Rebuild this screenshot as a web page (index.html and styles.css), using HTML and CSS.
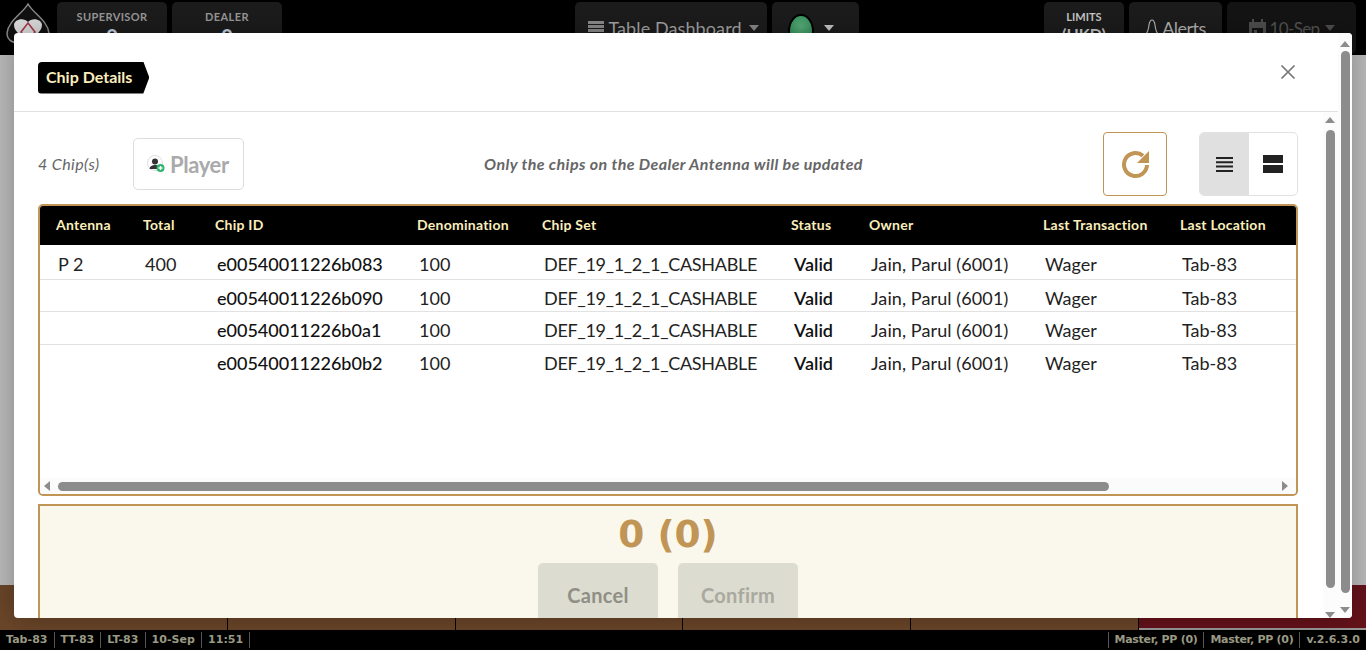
FILE: index.html
```html
<!DOCTYPE html>
<html lang="en">
<head>
    <meta charset="UTF-8">
    <meta name="viewport" content="width=device-width, initial-scale=1.0">
    <title>Chip Details</title>
    <link rel="stylesheet" href="styles.css">
</head>
<body>
    <!-- Top bar -->
    <header class="topbar">
        <svg class="logo" width="46" height="50" viewBox="0 0 46 50">
            <path d="M23 1 C28 10 43 18 44 30 C44 38 36 42 29 38 C30 42 31 45 33 48 L13 48 C15 45 16 42 17 38 C10 42 2 38 2 30 C3 18 18 10 23 1 Z" fill="#111" stroke="#8a8a8a" stroke-width="1.5"/>
            <path d="M23 39 C17 33 9 29 9 22 C9 16 19 14 23 19 C27 14 37 16 37 22 C37 29 29 33 23 39 Z" fill="#ddd"/>
            <path d="M23 20 L30 29 L23 38 L16 29 Z" fill="none" stroke="#a8384a" stroke-width="1.6"/>
        </svg>
        <div class="stat stat-wide"><span class="stat-label">SUPERVISOR</span><span class="stat-value">0</span></div>
        <div class="stat stat-wide"><span class="stat-label">DEALER</span><span class="stat-value">0</span></div>

        <div class="topbar-center">
            <div class="top-btn dashboard-btn">
                <svg width="16" height="14" viewBox="0 0 16 14"><path d="M0 0h16v3H0zM0 4h16v3H0zM0 8h16v3H0zM0 12h16v2H0z" fill="#8c8c8c"/></svg>
                <span>Table Dashboard</span><i class="caret"></i>
            </div>
            <div class="top-btn status-btn"><i class="status-dot"></i><i class="caret caret-light"></i></div>
        </div>

        <div class="topbar-right">
            <div class="stat limits"><span class="stat-label">LIMITS</span><span class="stat-value">(HKD)</span></div>
            <div class="top-btn alerts-btn">
                <svg width="14" height="19" viewBox="0 0 14 19"><path d="M7 1 C9 1 9.500 3 10 6 C10.500 10 11 13 13 15 L1 15 C3 13 3.500 10 4 6 C4.500 3 5 1 7 1 Z M5.500 16 H8.500 L7 18 Z" fill="none" stroke="#b5b5b5" stroke-width="1.2"/></svg>
                <span>Alerts</span>
            </div>
            <div class="top-btn date-btn">
                <svg width="19" height="19" viewBox="0 0 19 19"><path d="M1 3h3V0h2v3h7V0h2v3h3v16H1z M4 9v7h11V9z M6 11h3v3H6z" fill="#4f4f4f" fill-rule="evenodd"/></svg>
                <span>10-Sep</span><i class="caret caret-dim"></i>
            </div>
        </div>
    </header>

    <!-- Page behind the dialog -->
    <main class="backdrop">
        <div class="backdrop-fill"></div>
        <div class="tabs">
            <div class="tab"></div>
            <div class="tab"></div>
            <div class="tab"></div>
            <div class="tab"></div>
            <div class="tab"></div>
            <div class="tab tab-red"></div>
        </div>
    </main>

    <footer class="statusbar">
        <div class="status-group">
            <span>Tab-83</span><span>TT-83</span><span>LT-83</span><span>10-Sep</span><span>11:51</span>
        </div>
        <div class="status-group status-group-right">
            <span class="status-user">Master, PP (0)</span><span class="status-user">Master, PP (0)</span><span>v.2.6.3.0</span>
        </div>
    </footer>

    <!-- Chip details dialog -->
    <section class="modal">
        <div class="modal-main">
            <div class="modal-header">
                <h2 class="modal-title">Chip Details</h2>
                <svg class="modal-close" width="16" height="16" viewBox="0 0 16 16"><path d="M1.500 1.500L14.500 14.500M14.500 1.500L1.500 14.500" stroke="#777" stroke-width="1.7"/></svg>
            </div>

            <div class="modal-body">
                <div class="modal-content">
                    <div class="toolbar">
                        <span class="chip-count">4 Chip(s)</span>
                        <div class="player-btn">
                            <svg width="18" height="18" viewBox="0 0 18 18">
                                <circle cx="8" cy="8" r="7.500" fill="#fff" stroke="#ddd"/>
                                <circle cx="8" cy="6.500" r="3" fill="#333"/>
                                <path d="M2.500 14 C3 11 5 10 8 10 C11 10 13 11 13 14 Z" fill="#333"/>
                                <circle cx="13.500" cy="13" r="4" fill="#2fb56f"/>
                                <path d="M11.500 13h4M13.500 11v4" stroke="#fff" stroke-width="1.300"/>
                            </svg>
                            <span>Player</span>
                        </div>
                        <span class="toolbar-note">Only the chips on the Dealer Antenna will be updated</span>
                        <div class="refresh-btn">
                            <svg width="30" height="30" viewBox="0 0 30 30">
                                <path d="M27 16 A11.500 11.500 0 1 1 23 6.800" fill="none" stroke="#c09555" stroke-width="4"/>
                                <path d="M29 2 V14 H17 Z" fill="#c09555"/>
                            </svg>
                        </div>
                        <div class="view-toggle">
                            <div class="view-option view-active">
                                <svg width="17" height="15" viewBox="0 0 17 15"><path d="M0 0h17v2H0zM0 4.300h17v2H0zM0 8.600h17v2H0zM0 13h17v2H0z" fill="#222"/></svg>
                            </div>
                            <div class="view-option">
                                <svg width="20" height="18" viewBox="0 0 20 18"><path d="M0 0h20v8H0zM0 10h20v8H0z" fill="#222"/></svg>
                            </div>
                        </div>
                    </div>

                    <div class="table-box">
                        <div class="table-scroll">
                            <table class="chip-table">
                                <colgroup>
                                    <col class="col-antenna"><col class="col-total"><col class="col-id"><col class="col-denom"><col class="col-set"><col class="col-status"><col class="col-owner"><col class="col-trans"><col class="col-loc">
                                </colgroup>
                                <thead>
                                    <tr><th>Antenna</th><th>Total</th><th>Chip ID</th><th>Denomination</th><th>Chip Set</th><th>Status</th><th>Owner</th><th>Last Transaction</th><th>Last Location</th></tr>
                                </thead>
                                <tbody>
                                    <tr class="row-first"><td>P 2</td><td>400</td><td class="cell-id">e00540011226b083</td><td>100</td><td class="cell-set">DEF_19_1_2_1_CASHABLE</td><td class="cell-status">Valid</td><td class="cell-owner">Jain, Parul (6001)</td><td>Wager</td><td>Tab-83</td></tr>
                                    <tr class="row-b"><td></td><td></td><td class="cell-id">e00540011226b090</td><td>100</td><td class="cell-set">DEF_19_1_2_1_CASHABLE</td><td class="cell-status">Valid</td><td class="cell-owner">Jain, Parul (6001)</td><td>Wager</td><td>Tab-83</td></tr>
                                    <tr class="row-c"><td></td><td></td><td class="cell-id">e00540011226b0a1</td><td>100</td><td class="cell-set">DEF_19_1_2_1_CASHABLE</td><td class="cell-status">Valid</td><td class="cell-owner">Jain, Parul (6001)</td><td>Wager</td><td>Tab-83</td></tr>
                                    <tr class="row-d"><td></td><td></td><td class="cell-id">e00540011226b0b2</td><td>100</td><td class="cell-set">DEF_19_1_2_1_CASHABLE</td><td class="cell-status">Valid</td><td class="cell-owner">Jain, Parul (6001)</td><td>Wager</td><td>Tab-83</td></tr>
                                </tbody>
                            </table>
                        </div>
                        <div class="hbar">
                            <i class="arrow arrow-left"></i>
                            <div class="hbar-thumb"></div>
                            <i class="arrow arrow-right"></i>
                        </div>
                    </div>

                    <div class="summary">
                        <div class="summary-total">0 (0)</div>
                        <div class="summary-actions">
                            <div class="action-btn">Cancel</div>
                            <div class="action-btn action-disabled">Confirm</div>
                        </div>
                    </div>
                </div>

                <div class="vbar vbar-inner">
                    <i class="arrow arrow-up"></i>
                    <div class="vbar-thumb"></div>
                    <i class="arrow arrow-down"></i>
                </div>
            </div>
        </div>

        <div class="vbar vbar-outer">
            <i class="arrow arrow-up"></i>
            <div class="vbar-thumb"></div>
            <i class="arrow arrow-down"></i>
        </div>
    </section>
</body>
</html>
```

FILE: styles.css
```css
html, body {
    height: 100%;
}

body {
    margin: 0;
    height: 650px;
    overflow: hidden;
    display: flex;
    flex-direction: column;
    font-family: Lato, "Liberation Sans", sans-serif;
    background-color: #000;
    color: #222;
}

/* Top bar */
.topbar {
    height: 55px;
    flex: none;
    display: flex;
    align-items: flex-start;
    padding: 2px 10px 0 5px;
    box-sizing: border-box;
    background-color: #000;
    overflow: hidden;
}

.logo {
    flex: none;
    margin: 1px 6px 0 0;
}

.stat, .top-btn {
    height: 52px;
    background-color: #1c1c1c;
    border-radius: 5px;
    box-sizing: border-box;
}

.stat {
    display: flex;
    flex-direction: column;
    align-items: center;
    padding-top: 8px;
}

.stat-wide {
    width: 110px;
    margin-right: 5px;
}

.stat-label {
    font-size: 11px;
    font-weight: 700;
    line-height: 13px;
    letter-spacing: 0.4px;
    color: #9a9a9a;
}

.stat-value {
    margin-top: 1px;
    font-size: 20px;
    font-weight: 700;
    line-height: 24px;
    color: #c4d4e4;
}

.topbar-center {
    display: flex;
    gap: 5px;
    margin-left: 288px;
}

.topbar-right {
    display: flex;
    gap: 5px;
    margin-left: auto;
}

.top-btn {
    display: flex;
    align-items: center;
    justify-content: center;
    font-size: 18px;
    color: #b5b5b5;
}

.dashboard-btn {
    width: 192px;
    gap: 4px;
    padding-left: 5px;
    letter-spacing: 0.1px;
    color: #a5a5a5;
}

.status-btn {
    width: 87px;
    gap: 7px;
    padding-right: 9px;
}

.status-dot {
    flex: none;
    width: 22px;
    height: 30px;
    margin-top: 6px;
    border-radius: 50%;
    border: 2px solid #000;
    background: radial-gradient(circle at 50% 35%, #5cb07f, #16803f);
}

.caret {
    width: 0;
    height: 0;
    margin-left: 3px;
    border-left: 5px solid transparent;
    border-right: 5px solid transparent;
    border-top: 6px solid #8a8a8a;
}

.caret-light {
    border-top-color: #c8c8c8;
}

.caret-dim {
    border-top-color: #4f4f4f;
}

.limits {
    width: 80px;
}

.limits .stat-label {
    letter-spacing: 0;
    color: #c8c8c8;
}

.limits .stat-value {
    font-size: 16px;
    line-height: 20px;
    color: #c8c8c8;
}

.alerts-btn {
    width: 93px;
    gap: 3px;
    letter-spacing: -0.5px;
}

.date-btn {
    width: 129px;
    gap: 2px;
    font-size: 17px;
    letter-spacing: -0.6px;
    color: #555;
    background-color: #141414;
}

/* Page behind the dialog */
.backdrop {
    flex: 1;
    display: flex;
    flex-direction: column;
}

.backdrop-fill {
    flex: 1;
    background-color: #bcbcbc;
}

.tabs {
    height: 45px;
    display: flex;
}

.tab {
    flex: 1;
    background-color: #6b4629;
    border-right: 1px solid #000;
}

.tab-red {
    background-color: #66121a;
    border-right: none;
    border-bottom: 2px solid #999;
}

/* Status bar */
.statusbar {
    position: relative;
    z-index: 1;
    height: 20px;
    flex: none;
    display: flex;
    justify-content: space-between;
    align-items: center;
    font-family: "DejaVu Sans", sans-serif;
    font-size: 11px;
    font-weight: 700;
    color: #9a9a84;
    background-color: #000;
}

.status-group {
    display: flex;
    letter-spacing: 0.05px;
}

.status-group span {
    padding: 0 6px 0 6px;
    line-height: 16px;
    border-right: 1px solid #555;
}

.status-group-right {
    letter-spacing: 0;
}

.status-group-right span {
    border-right: none;
    border-left: 1px solid #555;
}

.status-group-right .status-user {
    letter-spacing: -0.3px;
}

/* Dialog */
.modal {
    position: absolute;
    left: 14px;
    top: 33px;
    width: 1338px;
    height: 585px;
    display: flex;
    background-color: #fff;
    border-radius: 4px;
    box-shadow: 0 0 30px rgba(0, 0, 0, 0.3);
    overflow: hidden;
}

.modal-main {
    width: 1324px;
    display: flex;
    flex-direction: column;
}

.modal-header {
    height: 79px;
    flex: none;
    display: flex;
    align-items: center;
    justify-content: space-between;
    padding: 0 42px 0 24px;
    box-sizing: border-box;
    border-bottom: 1px solid #e2e2e2;
}

.modal-title {
    margin: 11px 0 0;
    height: 32px;
    padding: 0 17px 0 8px;
    font-size: 16px;
    font-weight: 700;
    line-height: 30px;
    color: #fbeebc;
    background-color: #000;
    border-radius: 4px 0 0 4px;
    clip-path: polygon(0 0, calc(100% - 6px) 0, 100% 50%, calc(100% - 6px) 100%, 0 100%);
}

.modal-body {
    flex: 1;
    min-height: 0;
    display: flex;
}

.modal-content {
    flex: 1;
    min-width: 0;
    padding: 20px 25px 0 24px;
}

/* Toolbar */
.toolbar {
    height: 64px;
    display: flex;
    align-items: center;
    margin-bottom: 8px;
}

.chip-count {
    width: 95px;
    padding-bottom: 2px;
    font-size: 16px;
    font-style: italic;
    letter-spacing: 0.4px;
    color: #666;
}

.player-btn {
    width: 111px;
    height: 52px;
    display: flex;
    align-items: center;
    gap: 5px;
    padding-left: 13px;
    box-sizing: border-box;
    font-size: 22px;
    font-weight: 700;
    letter-spacing: -0.4px;
    color: #aaa;
    border: 1px solid #ddd;
    border-radius: 5px;
}

.toolbar-note {
    width: 859px;
    padding-bottom: 2px;
    text-align: center;
    font-size: 16px;
    font-style: italic;
    font-weight: 700;
    letter-spacing: 0.4px;
    color: #666;
}

.refresh-btn {
    width: 64px;
    height: 64px;
    display: flex;
    align-items: center;
    justify-content: center;
    box-sizing: border-box;
    border: 1px solid #c09555;
    border-radius: 4px;
}

.view-toggle {
    width: 99px;
    height: 64px;
    margin-left: 32px;
    display: flex;
    box-sizing: border-box;
    border: 1px solid #e2e2e2;
    border-radius: 5px;
    overflow: hidden;
}

.view-option {
    flex: 1;
    display: flex;
    align-items: center;
    justify-content: center;
}

.view-active {
    background-color: #e0e0e0;
}

/* Chip table */
.table-box {
    height: 292px;
    display: flex;
    flex-direction: column;
    box-sizing: border-box;
    border: 2px solid #c09555;
    border-radius: 5px;
    overflow: hidden;
}

.table-scroll {
    flex: 1;
    min-height: 0;
    overflow: hidden;
}

.chip-table {
    width: 1256px;
    table-layout: fixed;
    border-collapse: collapse;
}

.col-antenna { width: 87px; }
.col-total { width: 72px; }
.col-id { width: 202px; }
.col-denom { width: 125px; }
.col-set { width: 249px; }
.col-status { width: 78px; }
.col-owner { width: 174px; }
.col-trans { width: 137px; }
.col-loc { width: 132px; }

.chip-table th {
    height: 37px;
    padding: 0 0 2px 16px;
    text-align: left;
    font-size: 14px;
    font-weight: 700;
    letter-spacing: 0.25px;
    color: #fbeebc;
    background-color: #000;
}

.chip-table td {
    padding: 4px 0 0 18px;
    font-size: 18px;
    color: #222;
    white-space: nowrap;
    border-bottom: 1px solid #e2e2e2;
}

.row-first td { height: 30px; }
.row-b td { height: 27px; }
.row-c td { height: 28px; }
.row-d td { height: 28px; border-bottom: none; }

.chip-table .cell-id {
    font-weight: 500;
    color: #111;
}

.chip-table .cell-set {
    letter-spacing: -0.28px;
}

.chip-table .cell-status {
    padding-left: 19px;
    font-weight: 600;
    color: #111;
}

.chip-table .cell-owner {
    letter-spacing: 0.1px;
}

/* Fake scrollbars */
.hbar {
    height: 16px;
    flex: none;
    display: flex;
    align-items: center;
    padding: 0 8px 0 4px;
    background-color: #fbfbfb;
}

.hbar-thumb {
    width: 1051px;
    height: 9px;
    margin-left: 8px;
    background-color: #8c8c8c;
    border-radius: 5px;
}

.vbar {
    width: 15px;
    flex: none;
    display: flex;
    flex-direction: column;
    align-items: center;
    box-sizing: border-box;
    background-color: #fcfcfc;
}

.vbar-thumb {
    width: 9px;
    background-color: #8c8c8c;
    border-radius: 5px;
}

.vbar-inner {
    padding-top: 5px;
    padding-right: 1px;
}

.vbar-inner .vbar-thumb {
    height: 460px;
    margin: 7px 0 24px;
}

.vbar-outer {
    width: 14px;
    padding-top: 8px;
}

.vbar-outer .vbar-thumb {
    height: 542px;
    margin: 4px 0 14px;
}

.arrow {
    flex: none;
    width: 0;
    height: 0;
}

.arrow-up {
    border-left: 5px solid transparent;
    border-right: 5px solid transparent;
    border-bottom: 6px solid #8c8c8c;
}

.arrow-down {
    border-left: 5px solid transparent;
    border-right: 5px solid transparent;
    border-top: 6px solid #8c8c8c;
}

.arrow-left {
    border-top: 5px solid transparent;
    border-bottom: 5px solid transparent;
    border-right: 6px solid #8c8c8c;
}

.arrow-right {
    margin-left: auto;
    border-top: 5px solid transparent;
    border-bottom: 5px solid transparent;
    border-left: 6px solid #8c8c8c;
}

/* Summary panel */
.summary {
    margin-top: 8px;
    height: 130px;
    box-sizing: border-box;
    border: 2px solid #c09555;
    background-color: #faf8ec;
    text-align: center;
}

.summary-total {
    height: 57px;
    font-family: "DejaVu Sans", sans-serif;
    font-size: 37.5px;
    font-weight: 700;
    line-height: 56px;
    color: #c09555;
}

.summary-actions {
    display: flex;
    justify-content: center;
    gap: 20px;
}

.action-btn {
    width: 120px;
    height: 64px;
    padding-top: 18px;
    box-sizing: border-box;
    font-size: 20px;
    font-weight: 700;
    letter-spacing: 0.3px;
    line-height: 28px;
    color: #8f8f85;
    background-color: #dcdcd0;
    border-radius: 5px;
}

.action-disabled {
    color: #a9a99f;
}
```
